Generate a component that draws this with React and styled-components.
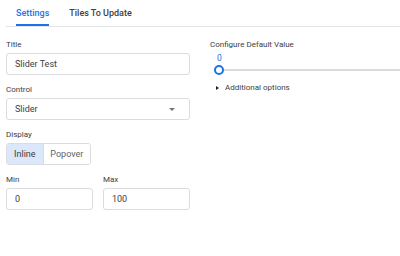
import React from 'react';
import styled, { createGlobalStyle } from 'styled-components';

const GlobalStyle = createGlobalStyle`
    body {
        margin: 0;
        background: #fff;
        font-family: Roboto, "Liberation Sans", sans-serif;
        color: #3c4043;
    }
`;

const Page = styled.div`
    width: 400px;
    height: 256px;
    overflow: hidden;
`;

const TabBar = styled.div`
    display: flex;
    height: 26px;
    margin-left: 6px;
    border-bottom: 1px solid #e3e5e8;
`;

const Tab = styled.div`
    display: flex;
    align-items: center;
    margin: 0 10px;
    padding-top: 1px;
    font-size: 9px;
    font-weight: 500;
    color: ${p => (p.active ? '#1a73e8' : '#3c4043')};
    border-bottom: 2px solid ${p => (p.active ? '#1a73e8' : 'transparent')};
    box-sizing: border-box;
`;

const Content = styled.div`
    display: flex;
    gap: 20px;
    padding: 13px 0 0 6px;
`;

const Column = styled.div`
    display: flex;
    flex-direction: column;
    gap: 10px;
    width: ${p => p.width || 'auto'};
    flex: ${p => (p.grow ? 1 : 'none')};
`;

const Field = styled.div`
    display: flex;
    flex-direction: column;
    width: ${p => p.width || 'auto'};
`;

const Label = styled.div`
    font-size: 8px;
    line-height: 10px;
    color: #3c4043;
    margin-bottom: 3px;
`;

const Input = styled.div`
    display: flex;
    align-items: center;
    justify-content: space-between;
    height: 22px;
    box-sizing: border-box;
    padding: 0 14px 0 8px;
    border: 1px solid #dadce0;
    border-radius: 3px;
    font-size: 9px;
    color: #3c4043;
`;

const Caret = styled.div`
    width: 0;
    height: 0;
    border-left: 3px solid transparent;
    border-right: 3px solid transparent;
    border-top: 3px solid #757575;
`;

const Segmented = styled.div`
    display: flex;
    width: 85px;
    height: 22px;
    box-sizing: border-box;
    border: 1px solid #dadce0;
    border-radius: 3px;
    overflow: hidden;
`;

const Segment = styled.div`
    display: flex;
    align-items: center;
    justify-content: center;
    width: ${p => p.width};
    font-size: 9px;
    color: ${p => (p.active ? '#3c4043' : '#5f6368')};
    background: ${p => (p.active ? '#dbe7fb' : '#fff')};
    border-left: ${p => (p.first ? 'none' : '1px solid #dadce0')};
`;

const Row = styled.div`
    display: flex;
    gap: 10px;
`;

const SliderValue = styled.div`
    font-size: 8.5px;
    line-height: 10px;
    color: #1a73e8;
    margin-left: 7px;
`;

const SliderTrack = styled.div`
    display: flex;
    align-items: center;
    height: 10px;
    margin: 2px 0 0 4px;
`;

const Thumb = styled.div`
    width: 10px;
    height: 10px;
    box-sizing: border-box;
    border: 2px solid #1a73e8;
    border-radius: 50%;
    background: #fff;
    flex: none;
`;

const Rail = styled.div`
    flex: 1;
    height: 2px;
    background: #dadce0;
`;

const Disclosure = styled.div`
    display: flex;
    align-items: center;
    gap: 6px;
    margin: 8px 0 0 6px;
    font-size: 8px;
    line-height: 10px;
    color: #3c4043;
`;

const Triangle = styled.div`
    width: 0;
    height: 0;
    border-top: 2.5px solid transparent;
    border-bottom: 2.5px solid transparent;
    border-left: 3px solid #202124;
`;

const App = () => {
    return (
        <Page>
            <GlobalStyle />
            <TabBar>
                <Tab active>Settings</Tab>
                <Tab>Tiles To Update</Tab>
            </TabBar>
            <Content>
                <Column width="184px">
                    <Field>
                        <Label>Title</Label>
                        <Input>Slider Test</Input>
                    </Field>
                    <Field>
                        <Label>Control</Label>
                        <Input>
                            Slider
                            <Caret />
                        </Input>
                    </Field>
                    <Field>
                        <Label>Display</Label>
                        <Segmented>
                            <Segment first active width="37px">Inline</Segment>
                            <Segment width="48px">Popover</Segment>
                        </Segmented>
                    </Field>
                    <Row>
                        <Field width="87px">
                            <Label>Min</Label>
                            <Input>0</Input>
                        </Field>
                        <Field width="87px">
                            <Label>Max</Label>
                            <Input>100</Input>
                        </Field>
                    </Row>
                </Column>
                <Column grow>
                    <Field>
                        <Label>Configure Default Value</Label>
                        <SliderValue>0</SliderValue>
                        <SliderTrack>
                            <Thumb />
                            <Rail />
                        </SliderTrack>
                        <Disclosure>
                            <Triangle />
                            Additional options
                        </Disclosure>
                    </Field>
                </Column>
            </Content>
        </Page>
    );
};

export default App;
